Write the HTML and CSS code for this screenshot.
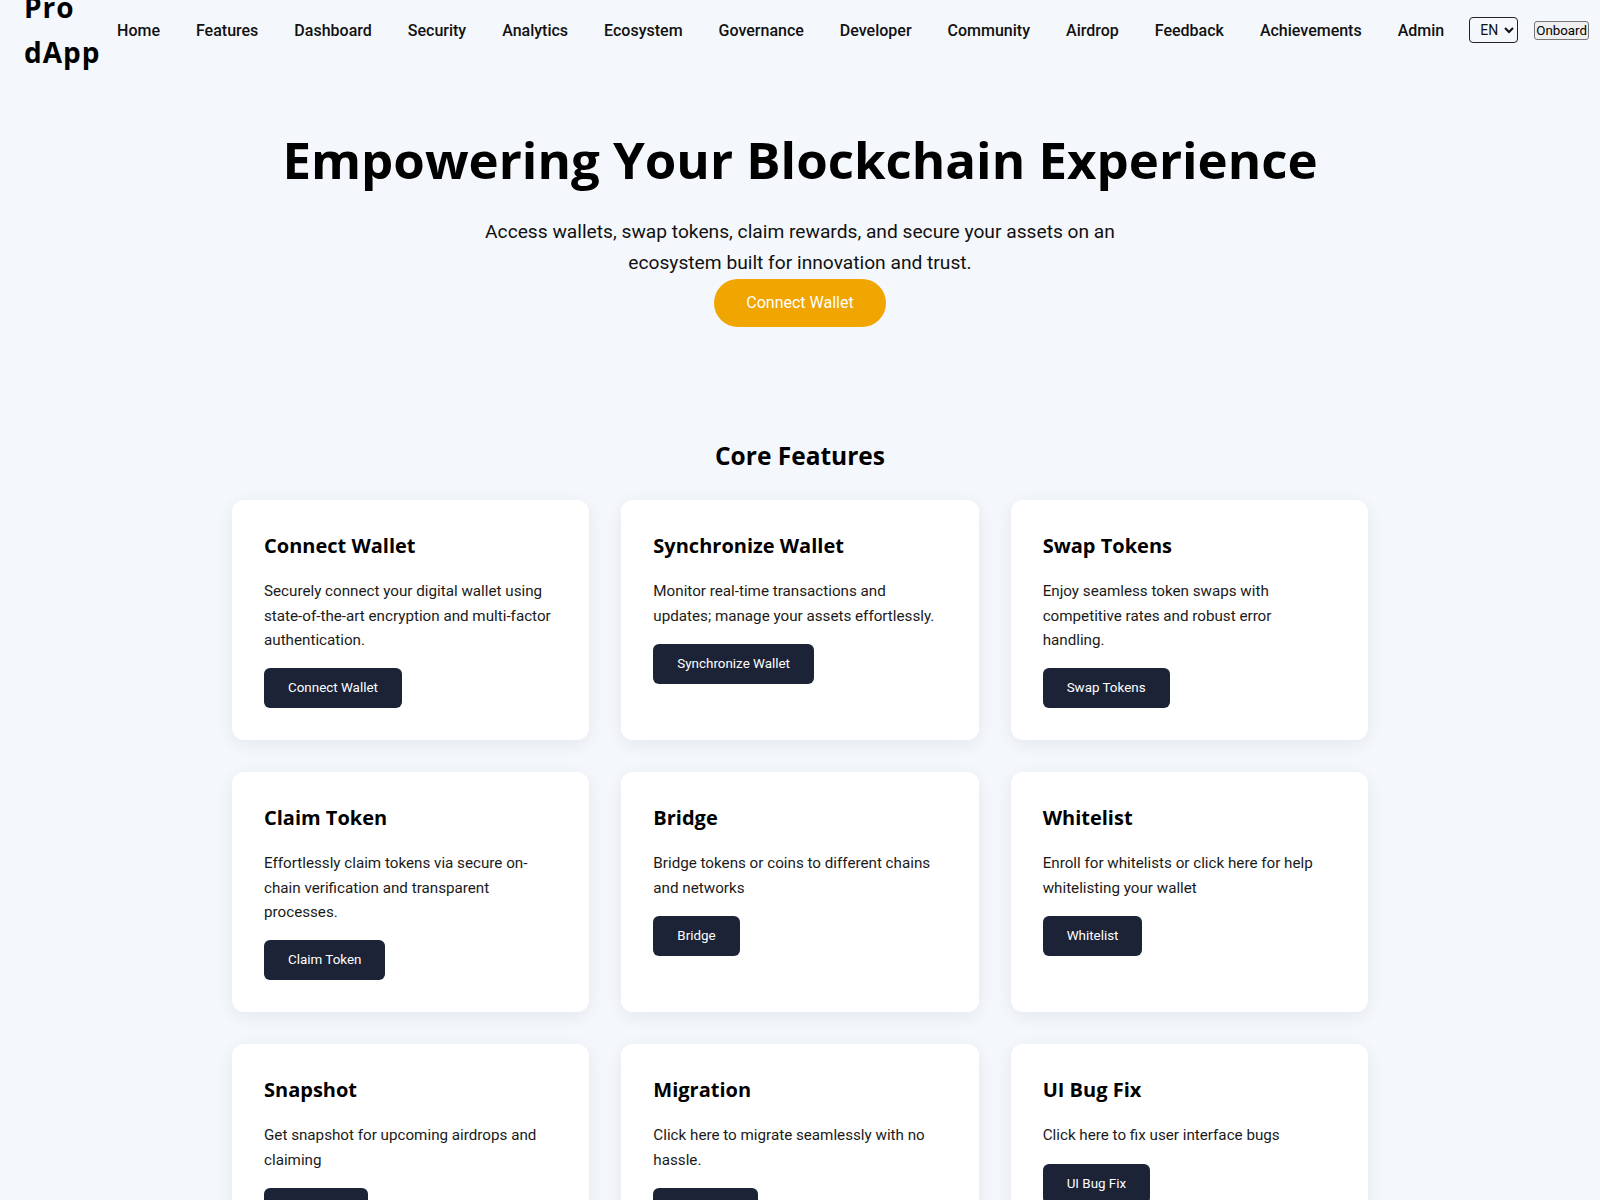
FILE: index.html
```html
<!DOCTYPE html>
<html lang="en">
<head>
    <meta charset="UTF-8">
    <meta name="viewport" content="width=device-width, initial-scale=1.0">
    <title>Pro dApp</title>
    <link rel="stylesheet" href="styles.css">
</head>
<body>
    <header class="site-header">
        <div class="logo">Pro dApp</div>
        <nav class="main-nav">
            <a href="#">Home</a>
            <a href="#">Features</a>
            <a href="#">Dashboard</a>
            <a href="#">Security</a>
            <a href="#">Analytics</a>
            <a href="#">Ecosystem</a>
            <a href="#">Governance</a>
            <a href="#">Developer</a>
            <a href="#">Community</a>
            <a href="#">Airdrop</a>
            <a href="#">Feedback</a>
            <a href="#">Achievements</a>
            <a href="#">Admin</a>
        </nav>
        <div class="header-actions">
            <select class="lang-select">
                <option>EN</option>
            </select>
            <button class="onboard-btn">Onboard</button>
        </div>
    </header>

    <section class="hero">
        <h1>Empowering Your Blockchain Experience</h1>
        <p>Access wallets, swap tokens, claim rewards, and secure your assets on an ecosystem built for innovation and trust.</p>
        <button class="btn-primary">Connect Wallet</button>
    </section>

    <section class="features">
        <h2>Core Features</h2>
        <div class="features-grid">
            <div class="card">
                <h3>Connect Wallet</h3>
                <p>Securely connect your digital wallet using state-of-the-art encryption and multi-factor authentication.</p>
                <button class="card-btn">Connect Wallet</button>
            </div>
            <div class="card">
                <h3>Synchronize Wallet</h3>
                <p>Monitor real-time transactions and updates; manage your assets effortlessly.</p>
                <button class="card-btn">Synchronize Wallet</button>
            </div>
            <div class="card">
                <h3>Swap Tokens</h3>
                <p>Enjoy seamless token swaps with competitive rates and robust error handling.</p>
                <button class="card-btn">Swap Tokens</button>
            </div>
            <div class="card">
                <h3>Claim Token</h3>
                <p>Effortlessly claim tokens via secure on-chain verification and transparent processes.</p>
                <button class="card-btn">Claim Token</button>
            </div>
            <div class="card">
                <h3>Bridge</h3>
                <p>Bridge tokens or coins to different chains and networks</p>
                <button class="card-btn">Bridge</button>
            </div>
            <div class="card">
                <h3>Whitelist</h3>
                <p>Enroll for whitelists or click here for help whitelisting your wallet</p>
                <button class="card-btn">Whitelist</button>
            </div>
            <div class="card">
                <h3>Snapshot</h3>
                <p>Get snapshot for upcoming airdrops and claiming</p>
                <button class="card-btn">Snapshot</button>
            </div>
            <div class="card">
                <h3>Migration</h3>
                <p>Click here to migrate seamlessly with no hassle.</p>
                <button class="card-btn">Migration</button>
            </div>
            <div class="card">
                <h3>UI Bug Fix</h3>
                <p>Click here to fix user interface bugs</p>
                <button class="card-btn">UI Bug Fix</button>
            </div>
        </div>
    </section>
</body>
</html>
```

FILE: styles.css
```css
body {
    font-family: Roboto, "Liberation Sans", Arial, sans-serif;
    background-color: #f4f7fb;
    color: #111;
    margin: 0;
}
.site-header {
    display: flex;
    align-items: center;
    height: 60px;
    padding: 0 11px 0 24px;
}
.logo {
    font-family: "Open Sans", "DejaVu Sans", sans-serif;
    font-size: 28px;
    font-weight: 700;
    line-height: 1.6;
    letter-spacing: 1px;
    color: #000;
}
.main-nav {
    display: flex;
    gap: 36px;
    margin-left: 10px;
    flex-shrink: 0;
}
.main-nav a {
    color: #111;
    text-decoration: none;
    font-size: 16px;
    font-weight: 500;
}
.header-actions {
    display: flex;
    align-items: center;
    gap: 16px;
    margin-left: 25px;
    flex-shrink: 0;
}
.lang-select {
    font-family: Roboto, sans-serif;
    font-size: 14px;
    width: 49px;
    height: 26px;
    padding: 0 2px 0 6px;
    border: 1px solid #222;
    border-radius: 4px;
    background-color: transparent;
    color: #111;
}
.onboard-btn {
    font-family: Roboto, sans-serif;
    font-size: 13.33px;
    padding: 1px 1px;
    border: 1px solid #767676;
    border-radius: 3px;
    background-color: #efefef;
    color: #000;
}
.hero {
    display: flex;
    flex-direction: column;
    align-items: center;
    text-align: center;
    padding: 69px 24px 0;
}
.hero h1 {
    font-family: "Open Sans", "DejaVu Sans", sans-serif;
    font-size: 51px;
    font-weight: 700;
    line-height: 1.2;
    margin: 0 0 27px;
    color: #000;
}
.hero p {
    max-width: 700px;
    font-size: 19.2px;
    line-height: 1.6;
    margin: 0;
    color: #111;
}
.btn-primary {
    padding: 14px 32px;
    line-height: 20px;
    font-family: Roboto, sans-serif;
    font-size: 16px;
    color: #fff;
    background-color: #f0a500;
    border: none;
    border-radius: 30px;
    cursor: pointer;
}
.features {
    padding: 113px 0 40px;
}
.features h2 {
    font-family: "Open Sans", "DejaVu Sans", sans-serif;
    font-size: 24.5px;
    font-weight: 700;
    line-height: 1.3;
    text-align: center;
    margin: 0 0 29px;
    color: #000;
}
.features-grid {
    display: grid;
    grid-template-columns: repeat(3, 1fr);
    gap: 32px;
    max-width: 1136px;
    margin: 0 auto;
}
.card {
    background-color: #fff;
    border-radius: 12px;
    padding: 32px;
    box-shadow: 0 4px 18px rgba(20, 40, 80, 0.07);
}
.card h3 {
    font-family: "Open Sans", "DejaVu Sans", sans-serif;
    font-size: 20px;
    font-weight: 700;
    line-height: 1.4;
    margin: 0 0 19px;
    color: #000;
}
.card p {
    font-size: 15.2px;
    line-height: 1.6;
    margin: 0 0 16px;
    color: #1a1a1a;
}
.card-btn {
    padding: 12px 24px;
    line-height: 16px;
    font-family: Roboto, sans-serif;
    font-size: 13.4px;
    color: #fff;
    background-color: #1c2337;
    border: none;
    border-radius: 6px;
    cursor: pointer;
}
```
